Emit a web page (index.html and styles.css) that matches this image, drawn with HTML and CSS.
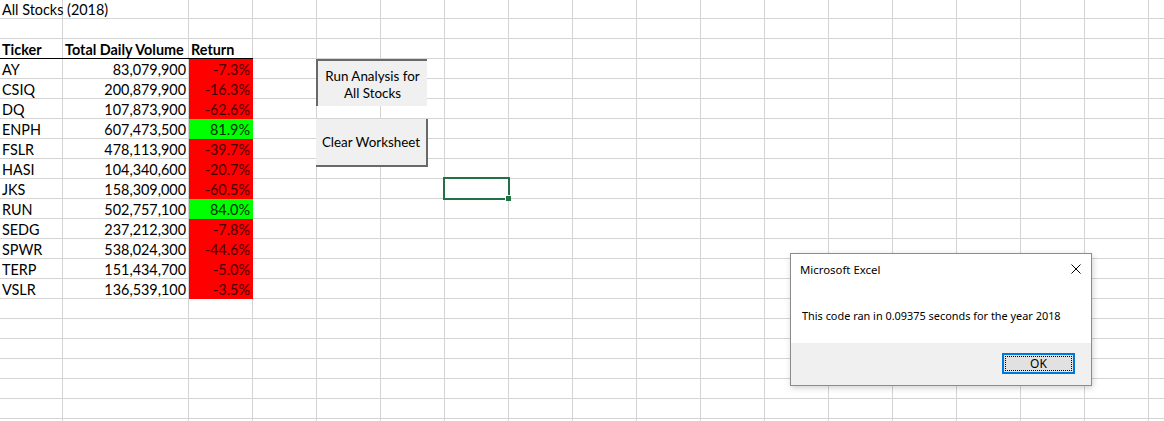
FILE: index.html
```html
<!DOCTYPE html>
<html lang="en">
<head>
<meta charset="utf-8">
<title>All Stocks (2018)</title>
<link rel="stylesheet" href="styles.css">
</head>
<body>
<div class="page">
  <div class="sheet">
    <div class="data">
      <div class="cell title">All Stocks (2018)</div><div class="cell"></div><div class="cell"></div>
      <div class="cell"></div><div class="cell"></div><div class="cell"></div>
      <div class="cell head">Ticker</div><div class="cell head">Total Daily Volume</div><div class="cell head">Return</div>

      <div class="cell">AY</div><div class="cell num">83,079,900</div><div class="cell num neg">-7.3%</div>
      <div class="cell">CSIQ</div><div class="cell num">200,879,900</div><div class="cell num neg">-16.3%</div>
      <div class="cell">DQ</div><div class="cell num">107,873,900</div><div class="cell num neg">-62.6%</div>
      <div class="cell">ENPH</div><div class="cell num">607,473,500</div><div class="cell num pos">81.9%</div>
      <div class="cell">FSLR</div><div class="cell num">478,113,900</div><div class="cell num neg">-39.7%</div>
      <div class="cell">HASI</div><div class="cell num">104,340,600</div><div class="cell num neg">-20.7%</div>
      <div class="cell">JKS</div><div class="cell num">158,309,000</div><div class="cell num neg">-60.5%</div>
      <div class="cell">RUN</div><div class="cell num">502,757,100</div><div class="cell num pos">84.0%</div>
      <div class="cell">SEDG</div><div class="cell num">237,212,300</div><div class="cell num neg">-7.8%</div>
      <div class="cell">SPWR</div><div class="cell num">538,024,300</div><div class="cell num neg">-44.6%</div>
      <div class="cell">TERP</div><div class="cell num">151,434,700</div><div class="cell num neg">-5.0%</div>
      <div class="cell">VSLR</div><div class="cell num">136,539,100</div><div class="cell num neg">-3.5%</div>
    </div>
  </div>

  <div class="btn btn-run">Run Analysis for<br>All Stocks</div>
  <div class="btn btn-clear">Clear Worksheet</div>

  <div class="selection"><span class="handle"></span></div>

  <div class="dialog">
    <div class="dlg-body">
      <div class="dlg-title">
        <span>Microsoft Excel</span>
        <svg class="dlg-close" width="10" height="10" viewBox="0 0 10 10"><path d="M0.5 0.5L9.5 9.5M9.5 0.5L0.5 9.5" stroke="#000" stroke-width="1" fill="none"/></svg>
      </div>
      <div class="dlg-msg">This code ran in 0.09375 seconds for the year 2018</div>
    </div>
    <div class="dlg-foot">
      <div class="ok"><span class="ok-inner">OK</span></div>
    </div>
  </div>
</div>
</body>
</html>
```

FILE: styles.css
```css
html, body {
  margin: 0;
  padding: 0;
  background: #fff;
}

.page {
  position: relative;
  width: 1164px;
  height: 421px;
  overflow: hidden;
  font-family: Lato, "Liberation Sans", sans-serif;
  color: #000;
}

.sheet {
  margin-top: -1px;
  height: 442px;
  background-image:
    repeating-linear-gradient(to bottom, transparent 0 19px, #d4d4d4 19px 20px),
    linear-gradient(to right, transparent 62px, #d4d4d4 62px 63px, transparent 63px 188px, #d4d4d4 188px 189px, transparent 189px),
    repeating-linear-gradient(to right, transparent 0 63px, #d4d4d4 63px 64px);
  background-position: 0 0, 0 0, 189px 0;
  background-size: auto, auto, calc(100% - 189px) 100%;
  background-repeat: repeat, no-repeat, no-repeat;
}

.data {
  display: grid;
  grid-template-columns: 63px 126px 64px;
  grid-auto-rows: 20px;
}

.cell {
  box-sizing: border-box;
  height: 20px;
  padding: 1px 3px 0 2px;
  font-size: 14.4px;
  line-height: 20px;
  white-space: nowrap;
  overflow: visible;
  color: #000;
}

.title {
  position: relative;
  z-index: 1;
}

.head {
  font-weight: 700;
  border-bottom: 1px solid #000;
}

.num {
  text-align: right;
}

.neg {
  background: #ff0000;
  color: #4a0000;
}

.pos {
  background: #00ff00;
  color: #003000;
}

.btn {
  position: absolute;
  box-sizing: border-box;
  background: #f0f0f0;
  font-size: 13.4px;
  line-height: 17px;
  text-align: center;
  display: flex;
  align-items: center;
  justify-content: center;
  white-space: nowrap;
}

.btn-run {
  left: 316px;
  top: 59px;
  width: 111px;
  height: 47px;
  border-top: 2px solid #696969;
  border-left: 2px solid #696969;
  padding-top: 2px;
}

.btn-clear {
  left: 316px;
  top: 119px;
  width: 112px;
  height: 48px;
  border-right: 2px solid #696969;
  border-bottom: 2px solid #696969;
}

.selection {
  position: absolute;
  left: 443px;
  top: 177px;
  width: 67px;
  height: 23px;
  box-sizing: border-box;
  border: 2px solid #217346;
}

.handle {
  position: absolute;
  right: -3px;
  bottom: -3px;
  width: 5px;
  height: 5px;
  background: #217346;
  border: 1px solid #fff;
  border-right: 0;
  border-bottom: 0;
}

.dialog {
  position: absolute;
  left: 790px;
  top: 253px;
  width: 302px;
  height: 133px;
  box-sizing: border-box;
  border: 1px solid #8c8c8c;
  background: #fff;
  box-shadow: 1px 2px 6px rgba(0, 0, 0, 0.18);
  display: flex;
  flex-direction: column;
  font-family: "Noto Sans", "Open Sans", sans-serif;
  font-size: 11.4px;
  white-space: nowrap;
}

.dlg-body {
  flex: 1;
  padding: 0 10px 0 9px;
}

.dlg-title {
  display: flex;
  justify-content: space-between;
  align-items: center;
  height: 30px;
}

.dlg-msg {
  margin-top: 24px;
  padding-left: 2px;
  font-size: 10.9px;
}

.dlg-foot {
  height: 42px;
  background: #f0f0f0;
  display: flex;
  justify-content: flex-end;
  align-items: flex-start;
  padding: 10px 16px 0 0;
  box-sizing: border-box;
}

.ok {
  box-sizing: border-box;
  width: 73px;
  height: 21px;
  border: 2px solid #0078d7;
  background: #e1e1e1;
  padding: 1px;
}

.ok-inner {
  display: block;
  height: 100%;
  box-sizing: border-box;
  border: 1px dotted #000;
  text-align: center;
  line-height: 13px;
  font-size: 12px;
}
```
